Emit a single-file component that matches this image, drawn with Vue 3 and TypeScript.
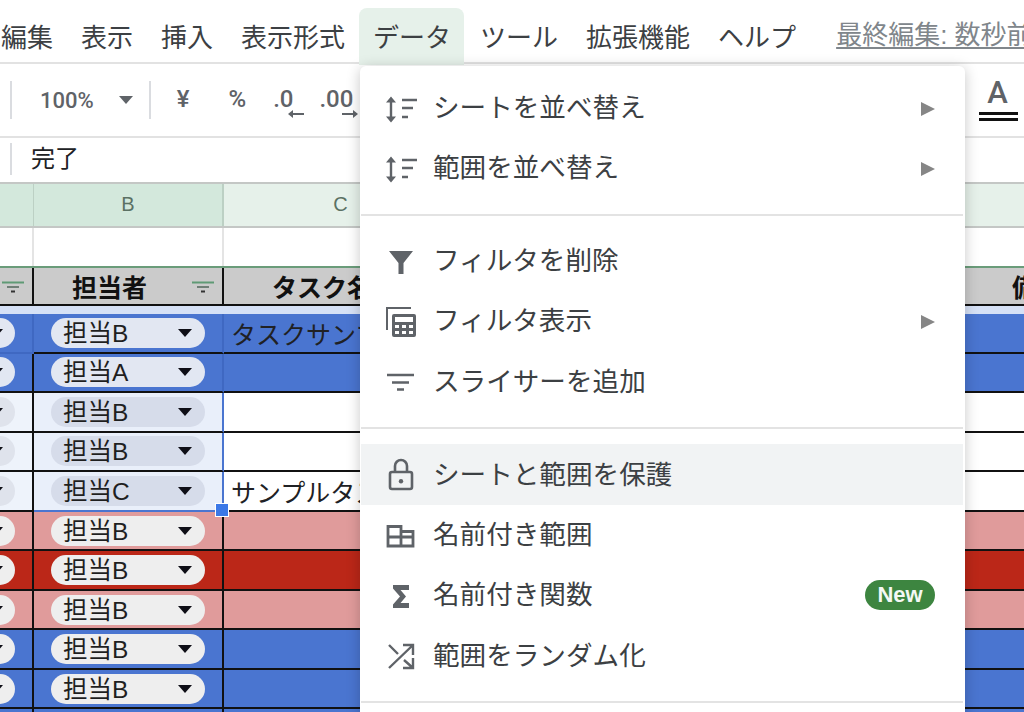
<script setup lang="ts">
type Tone = 'blue' | 'blue-first' | 'plain' | 'pink' | 'red'
interface Row { tone: Tone; who: string; task: string; selected: boolean; last?: boolean }
interface Shape { d: string; fill?: boolean; w?: number }
interface Item { label: string; icon: string; sub?: boolean; badge?: string; hover?: boolean }

const topMenus = ['編集', '表示', '挿入', '表示形式', 'データ', 'ツール', '拡張機能', 'ヘルプ']

const rows: Row[] = [
  { tone: 'blue-first', who: '担当B', task: 'タスクサンプル', selected: true },
  { tone: 'blue', who: '担当A', task: '', selected: true },
  { tone: 'plain', who: '担当B', task: '', selected: true },
  { tone: 'plain', who: '担当B', task: '', selected: true },
  { tone: 'plain', who: '担当C', task: 'サンプルタスク', selected: true, last: true },
  { tone: 'pink', who: '担当B', task: '', selected: false },
  { tone: 'red', who: '担当B', task: '', selected: false },
  { tone: 'pink', who: '担当B', task: '', selected: false },
  { tone: 'blue', who: '担当B', task: '', selected: false },
  { tone: 'blue', who: '担当B', task: '', selected: false }
]

const sortShapes: Shape[] = [
  { d: 'M9 11V30', w: 2.4 },
  { d: 'M4 13.5 9 7.5 14 13.5z M4 27.5 9 33.5 14 27.5z', fill: true },
  { d: 'M20 11H35 M20 19H31 M20 28H26', w: 2.4 }
]

const icons: Record<string, Shape[]> = {
  sort: sortShapes,
  funnel: [{ d: 'M7 8H31L21.5 20V31H16.5V20z', fill: true }],
  views: [
    { d: 'M5 27V5H29', w: 2 },
    { d: 'M12 11H32a2 2 0 0 1 2 2V32a2 2 0 0 1-2 2H12a2 2 0 0 1-2-2V13a2 2 0 0 1 2-2z M13 14V19H31V14z M13 22V25H17V22z M20 22V25H24V22z M27 22V25H31V22z M13 28V31H17V28z M20 28V31H24V28z M27 28V31H31V28z', fill: true }
  ],
  slicer: [{ d: 'M5 12H32 M10 19.5H27 M15 26.5H22', w: 2.4 }],
  lock: [
    { d: 'M10 16H28a2 2 0 0 1 2 2V31a2 2 0 0 1-2 2H10a2 2 0 0 1-2-2V18a2 2 0 0 1 2-2z M13 16V10a6 6 0 0 1 12 0V16', w: 2.6 },
    { d: 'M19 23a2.2 2.2 0 1 1 0 4.4 2.2 2.2 0 1 1 0-4.4z', fill: true }
  ],
  named: [{ d: 'M6 9.5H19V14.5H31V29H6z M6 20H31 M19 9.5V29', w: 2.8 }],
  sigma: [{ d: 'M11 8H27V13H18.5L24 19.5 18.5 26H27V31H11V27.5L18 19.5 11 11.5z', fill: true }],
  shuffle: [
    { d: 'M7 31 31 8 M21 8H31V18 M7 8 16 17 M22 23 31 31 M21 31H31V21', w: 2.4 }
  ]
}

const groups: Item[][] = [
  [
    { label: 'シートを並べ替え', icon: 'sort', sub: true },
    { label: '範囲を並べ替え', icon: 'sort', sub: true }
  ],
  [
    { label: 'フィルタを削除', icon: 'funnel' },
    { label: 'フィルタ表示', icon: 'views', sub: true },
    { label: 'スライサーを追加', icon: 'slicer' }
  ],
  [
    { label: 'シートと範囲を保護', icon: 'lock', hover: true },
    { label: '名前付き範囲', icon: 'named' },
    { label: '名前付き関数', icon: 'sigma', badge: 'New' },
    { label: '範囲をランダム化', icon: 'shuffle' }
  ],
  []
]
</script>

<template>
  <div class="page">
    <nav class="menubar">
      <span
        v-for="m in topMenus"
        :key="m"
        class="top-item"
        :class="{ active: m === 'データ' }"
      >{{ m }}</span>
      <span class="last-edit">最終編集: 数秒前</span>
    </nav>

    <div class="toolbar">
      <i class="tool-divider first"></i>
      <span class="zoom-value">100%</span>
      <i class="tool-caret"></i>
      <i class="tool-divider second"></i>
      <span class="tool-text yen">¥</span>
      <span class="tool-text percent">%</span>
      <span class="decimal dec-less">.0
        <svg class="dec-arrow" viewBox="0 0 16 8" width="16" height="8"><path d="M0 4 5 0V3H16V5H5V8z" /></svg>
      </span>
      <span class="decimal dec-more">.00
        <svg class="dec-arrow" viewBox="0 0 16 8" width="16" height="8"><path d="M16 4 11 0V3H0V5H11V8z" /></svg>
      </span>
      <span class="text-color">
        <span class="color-letter">A</span>
        <i class="color-bar"></i>
      </span>
    </div>

    <div class="formula">
      <i class="formula-divider"></i>
      <span class="formula-text">完了</span>
    </div>

    <div class="col-heads">
      <div class="col-a"></div>
      <div class="col-b">B</div>
      <div class="col-c">C</div>
      <div class="col-rest"></div>
    </div>

    <div class="blank-row">
      <div class="blank-a"></div>
      <div class="blank-b"></div>
    </div>

    <div class="head-row">
      <div class="head-cell head-a">
        <svg class="filter" viewBox="0 0 22 12" width="22" height="12"><path d="M0 1.5H22" stroke="#5f9a75" /><path d="M5 6H17" stroke="#6f7f76" /><path d="M9 10.5H13" stroke="#333" /></svg>
      </div>
      <div class="head-cell head-b">
        <span>担当者</span>
        <svg class="filter" viewBox="0 0 22 12" width="22" height="12"><path d="M0 1.5H22" stroke="#5f9a75" /><path d="M5 6H17" stroke="#6f7f76" /><path d="M9 10.5H13" stroke="#333" /></svg>
      </div>
      <div class="head-cell head-c">タスク名</div>
      <div class="head-cell head-d">備考</div>
    </div>

    <div class="strip"></div>

    <div v-for="(r, i) in rows" :key="i" class="row" :class="[r.tone, { active: r.selected }]">
      <div class="cell cell-a">
        <span class="pill pill-cut"><i class="caret"></i></span>
      </div>
      <div class="cell cell-b" :class="{ sel: r.selected, last: r.last }">
        <span class="pill"><span class="who">{{ r.who }}</span><i class="caret"></i></span>
        <i v-if="r.last" class="handle"></i>
      </div>
      <div class="cell cell-c">{{ r.task }}</div>
    </div>
    <div class="row blue tail">
      <div class="cell cell-a"></div>
      <div class="cell cell-b"></div>
      <div class="cell cell-c"></div>
    </div>

    <aside class="menu">
      <template v-for="(group, g) in groups" :key="g">
        <div v-for="item in group" :key="item.label" class="menu-item" :class="{ hover: item.hover }">
          <svg class="menu-icon" viewBox="0 0 36 36" width="36" height="36">
            <path
              v-for="(s, k) in icons[item.icon]"
              :key="k"
              :d="s.d"
              :fill="s.fill ? '#5f6368' : 'none'"
              :stroke="s.fill ? 'none' : '#5f6368'"
              :stroke-width="s.w ?? 0"
              fill-rule="evenodd"
            />
          </svg>
          <span class="menu-label">{{ item.label }}</span>
          <i v-if="item.sub" class="sub-arrow"></i>
          <span v-if="item.badge" class="badge">{{ item.badge }}</span>
        </div>
        <div v-if="g < groups.length - 1" class="menu-sep"></div>
      </template>
    </aside>
  </div>
</template>

<style>
html, body { margin: 0; background: #fff; }
</style>

<style scoped>
.page {
  position: relative;
  width: 1024px;
  height: 712px;
  overflow: hidden;
  background: #fff;
  font-family: "Liberation Sans", "Noto Sans CJK JP", sans-serif;
  color: #202124;
}
.menubar {
  box-sizing: border-box;
  height: 64px;
  padding-top: 8px;
  margin-left: -13px;
  width: 1037px;
  display: flex;
  white-space: nowrap;
  position: relative;
}
.menubar::after {
  content: "";
  position: absolute;
  left: 0;
  right: 0;
  bottom: 0;
  height: 2px;
  background: #e2e2e2;
}
.top-item {
  height: 57px;
  line-height: 60px;
  padding: 0 14px;
  font-size: 26px;
  color: #3c4043;
  position: relative;
  z-index: 1;
}
.top-item.active {
  padding: 0 13px 0 14px;
  margin-right: 2px;
  background: #e6f1ea;
  border-radius: 8px 8px 0 0;
}
.last-edit {
  margin-left: 26px;
  font-size: 26px;
  line-height: 54px;
  height: 54px;
  color: #80868b;
  text-decoration: underline;
  text-underline-offset: 3px;
}
.toolbar {
  box-sizing: border-box;
  height: 74px;
  border-bottom: 2px solid #e2e2e2;
  display: flex;
  align-items: center;
  color: #5f6368;
  position: relative;
}
.tool-divider {
  width: 2px;
  height: 38px;
  background: #dadce0;
}
.tool-divider.first { margin-left: 10px; }
.tool-divider.second { margin-left: 16px; }
.zoom-value {
  margin-left: 28px;
  font-family: Roboto, "Liberation Sans", sans-serif;
  font-weight: 500;
  font-size: 22px;
}
.tool-caret {
  margin-left: 25px;
  width: 0;
  height: 0;
  border-left: 7.5px solid transparent;
  border-right: 7.5px solid transparent;
  border-top: 8px solid #5f6368;
}
.tool-text {
  font-family: Roboto, "Liberation Sans", sans-serif;
  font-weight: 500;
  font-size: 24px;
  margin-top: -2px;
}
.yen { margin-left: 26px; }
.percent { margin-left: 39px; }
.decimal {
  position: relative;
  font-family: Roboto, "Liberation Sans", sans-serif;
  font-weight: 500;
  font-size: 24px;
  margin-top: -2px;
}
.dec-less { margin-left: 27px; }
.dec-more { margin-left: 26px; }
.dec-arrow {
  position: absolute;
  right: -11px;
  bottom: -5px;
  fill: #5f6368;
}
.dec-more .dec-arrow { right: -5px; }
.text-color {
  margin-left: auto;
  margin-right: 6px;
  width: 39px;
  display: flex;
  flex-direction: column;
  align-items: center;
}
.color-letter {
  font-family: Roboto, "Liberation Sans", sans-serif;
  font-weight: 500;
  font-size: 31px;
  line-height: 31px;
  color: #5f6368;
  margin-top: -2px;
  margin-left: -2px;
}
.color-bar {
  margin-top: 4px;
  width: 100%;
  height: 3px;
  border-top: 3px solid #111;
  border-bottom: 3px solid #111;
}
.formula {
  box-sizing: border-box;
  height: 44px;
  display: flex;
  align-items: center;
  font-size: 24px;
  padding-bottom: 2px;
}
.formula-text { margin-top: -5px; }
.formula-divider {
  width: 2px;
  height: 32px;
  background: #dadce0;
  margin: 0 19px 0 10px;
}
.col-heads {
  box-sizing: border-box;
  height: 46px;
  display: flex;
  border-top: 2px solid #c4c7c5;
  border-bottom: 2px solid #c4c7c5;
  font-size: 20px;
  color: #5b7164;
  text-align: center;
  line-height: 41px;
}
.col-a {
  box-sizing: border-box;
  width: 34px;
  background: #d3e8dc;
  border-right: 1px solid #bcd0c4;
}
.col-b {
  box-sizing: border-box;
  width: 190px;
  background: #d3e8dc;
  border-right: 2px solid #bcd0c4;
}
.col-c {
  box-sizing: border-box;
  width: 233px;
  background: #e6f1ea;
}
.col-rest {
  flex: 1;
  background: #e6f1ea;
}
.blank-row {
  height: 38px;
  display: flex;
}
.blank-a, .blank-b {
  box-sizing: border-box;
  border-right: 2px solid #e4e4e4;
}
.blank-a { width: 34px; }
.blank-b { width: 190px; }
.head-row {
  box-sizing: border-box;
  height: 40px;
  display: flex;
  overflow: hidden;
  background: #cbcbcb;
  border-top: 2px solid #6a9c7a;
  border-bottom: 2px solid #111;
  font-size: 25px;
  font-weight: 700;
  color: #111;
}
.head-cell {
  box-sizing: border-box;
  flex: none;
  display: flex;
  align-items: center;
  white-space: nowrap;
}
.head-a {
  width: 34px;
  border-right: 2px solid #111;
  padding-left: 2px;
}
.head-b {
  width: 190px;
  border-right: 2px solid #111;
  padding-left: 38px;
}
.head-b .filter { margin-left: 5px; }
.head-b span { width: 115px; }
.head-c {
  width: 233px;
  padding-left: 48px;
}
.head-d {
  padding-left: 555px;
}
.filter {
  flex-shrink: 0;
  stroke-width: 2;
  margin-top: 2px;
}
.strip {
  height: 8px;
  background: #d6e1f6;
}
.row {
  height: 39.55px;
  display: flex;
}
.row.tail { height: 8px; }
.row.tail .cell { border-bottom: 0; }
.cell {
  box-sizing: border-box;
  border-bottom: 2px solid #111;
  display: flex;
  align-items: center;
  position: relative;
  white-space: nowrap;
}
.cell-a {
  width: 34px;
  border-right: 2px solid #111;
  overflow: hidden;
}
.cell-b {
  width: 190px;
  padding-left: 17px;
  border-right: 2px solid #111;
}
.cell-c {
  flex: 1;
  padding-left: 7px;
  font-size: 25px;
}
.blue .cell, .blue-first .cell { background: #4a75d0; }
.pink .cell { background: #e09b9b; }
.red .cell { background: #bb2718; }
.plain .cell { background: #fff; }
.blue-first .cell-a, .blue-first .cell-b { border-right-color: #3f68c2; }
.blue-first .cell-a { border-bottom-color: #3f68c2; }
.blue-first .cell-b { border-bottom-color: #111; }
.blue .cell-b.sel { border-right-color: #3f68c2; }
.plain .cell-a { background: #eef3fb; }
.plain .cell-b.sel {
  background: #e9effa;
  border-right-color: #4a75d0;
}
.cell-b.last { border-bottom-color: #4a75d0 !important; }
.pill {
  flex-shrink: 0;
  box-sizing: border-box;
  width: 154px;
  height: 30px;
  border-radius: 15px;
  background: #eeeeee;
  display: flex;
  align-items: center;
  justify-content: space-between;
  padding: 0 13px 0 12px;
  font-size: 24.5px;
  color: #1f1f1f;
}
.who { line-height: 30px; margin-top: 2px; }
.pill-cut {
  width: 60px;
  margin-left: -45px;
  justify-content: flex-end;
  padding-right: 12px;
}
.row.active .pill { background: #e2e7f2; }
.row.plain .cell-b .pill { background: #d6dcea; }
.row.plain .cell-a .pill { background: #dfe3ec; }
.caret {
  width: 0;
  height: 0;
  border-left: 7.5px solid transparent;
  border-right: 7.5px solid transparent;
  border-top: 8px solid #0e0e16;
}
.handle {
  position: absolute;
  right: -6px;
  bottom: -6px;
  box-sizing: border-box;
  width: 12px;
  height: 12px;
  background: #3b78e7;
  outline: 1px solid #fff;
  z-index: 2;
}
.menu {
  position: absolute;
  left: 360px;
  top: 66px;
  width: 605px;
  bottom: -20px;
  box-sizing: border-box;
  padding: 11px 2px 0 1px;
  background: #fff;
  border-radius: 6px 6px 0 0;
  box-shadow: 0 2px 14px rgba(0, 0, 0, 0.22);
  z-index: 3;
  overflow: hidden;
}
.menu-item {
  box-sizing: border-box;
  height: 60.25px;
  display: flex;
  align-items: center;
  padding-left: 21px;
  padding-right: 28px;
  font-size: 26.6px;
  color: #3c4043;
}
.menu-item.hover { background: #f1f3f4; }
.menu-icon {
  flex-shrink: 0;
  margin-right: 15px;
  overflow: visible;
}
.menu-label {
  flex: 1;
  white-space: nowrap;
  margin-top: -4px;
}
.sub-arrow {
  width: 0;
  height: 0;
  margin-top: 3px;
  border-top: 7.5px solid transparent;
  border-bottom: 7.5px solid transparent;
  border-left: 14px solid #868686;
}
.badge {
  box-sizing: border-box;
  width: 70px;
  height: 30px;
  line-height: 30px;
  text-align: center;
  border-radius: 15px;
  background: #3d8540;
  color: #f4f8f4;
  font-size: 22px;
  font-weight: 700;
}
.menu-sep {
  height: 2px;
  margin: 16px 0 15px;
  background: #e3e3e3;
}
</style>
